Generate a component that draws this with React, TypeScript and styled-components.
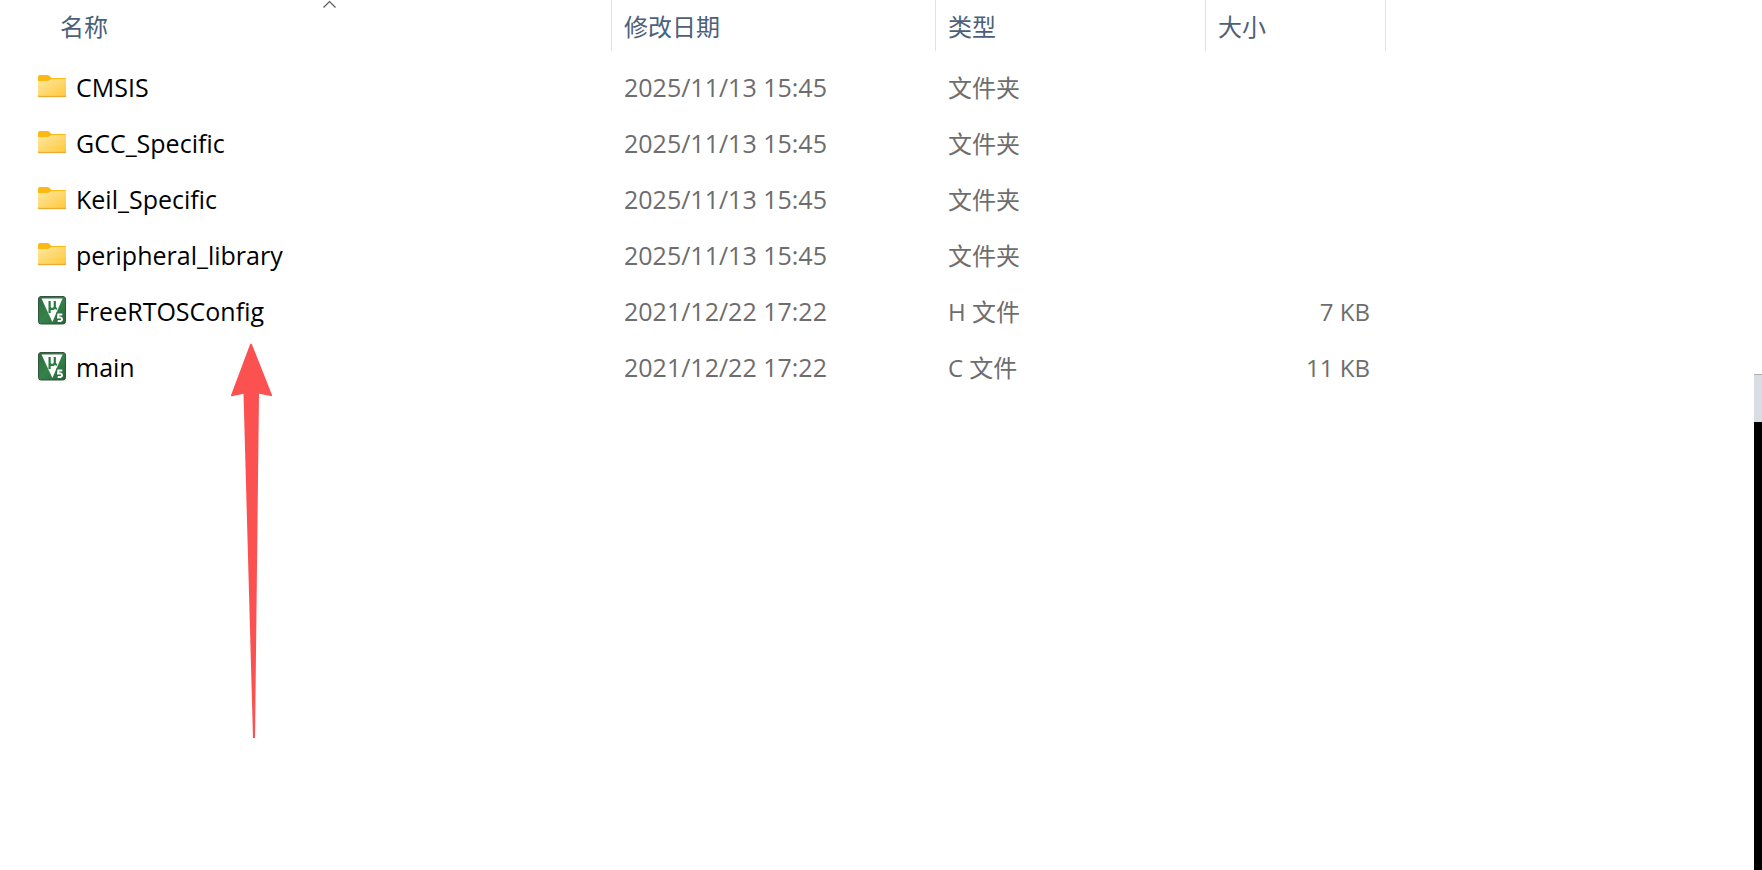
import React from "react";
import styled, { createGlobalStyle } from "styled-components";

const GlobalStyle = createGlobalStyle`
  *, *::before, *::after { box-sizing: border-box; }
  body {
    margin: 0;
    background: #fff;
    font-family: "Open Sans", "Noto Sans CJK SC", sans-serif;
    font-size: 24px;
    line-height: 32px;
  }
`;

const Window = styled.div`
  display: flex;
  min-height: 100vh;
`;

const ListPane = styled.main`
  position: relative;
  flex: 1;
  min-width: 0;
`;

const BackdropEdge = styled.div`
  display: flex;
  flex-direction: column;
  flex: none;
  width: 8px;
  padding-top: 374px;
`;

const BackdropBar = styled.div`
  height: 48px;
  border-top: 1px solid #aaadb2;
  background: #d9dee4;
`;

const BackdropBody = styled.div`
  flex: 1;
  background: #000;
`;

const FileTable = styled.table`
  width: 1386px;
  table-layout: fixed;
  border-collapse: separate;
  border-spacing: 0;
`;

const Column = styled.col<{ $width: number }>`
  width: ${(p) => p.$width}px;
`;

const HeaderCell = styled.th<{ $indent?: boolean }>`
  height: 51px;
  padding: 0 0 0 ${(p) => (p.$indent ? 48 : 0)}px;
  border-right: 1px solid #e2e2e2;
  font-weight: 400;
`;

const SortButton = styled.button`
  position: relative;
  display: block;
  width: 100%;
  height: 51px;
  padding: 2px 12px 0;
  border: 0;
  background: none;
  color: #4c607a;
  font: inherit;
  text-align: left;
`;

const SortMark = styled.svg`
  position: absolute;
  top: 0;
  left: 0;
  right: 0;
  margin: 0 auto;
`;

const Rows = styled.tbody`
  &::before {
    content: "";
    display: block;
    height: 9px;
  }
`;

const Cell = styled.td<{ $align?: "right" }>`
  height: 56px;
  padding: 0 ${(p) => (p.$align ? 16 : 12)}px 0 12px;
  color: #6d6d6d;
  text-align: ${(p) => p.$align ?? "left"};
  white-space: nowrap;
`;

const DateCell = styled(Cell)`
  padding-bottom: 2px;
  font-size: 25px;
`;

const NameCell = styled(DateCell)`
  padding-left: 37px;
  color: #000;
`;

const FileName = styled.div`
  display: flex;
  align-items: center;
  gap: 9px;
`;

const FileIcon = styled.svg`
  flex: none;
  width: 30px;
  height: 30px;
`;

const Pointer = styled.svg`
  position: absolute;
  top: 342px;
  left: 230px;
`;

const FolderIcon = () => (
  <FileIcon viewBox="0 -1 30 30" aria-hidden="true">
    <defs>
      <linearGradient id="folder-front" x1="0" y1="0" x2="1" y2="1">
        <stop offset="0" stopColor="#ffe8a2" />
        <stop offset="1" stopColor="#fec737" />
      </linearGradient>
    </defs>
    <path d="M1 4q0-2 2-2h7.500q1 0 1.800.8L14.500 5H28q1 0 1 1v4H1z" fill="#fdb813" />
    <path d="M1 8h9.500q1 0 1.800-.7L14.500 6H28q1 0 1 1v16q0 1-1 1H2q-1 0-1-1z" fill="url(#folder-front)" />
    <path d="M1 22.500q0 .7 1 .7h26q1 0 1-.7v.5q0 1-1 1H2q-1 0-1-1z" fill="#e9a52a" stroke="#e9a52a" strokeWidth=".3" />
  </FileIcon>
);

const KeilIcon = () => (
  <FileIcon viewBox="0 1 30 30" aria-hidden="true">
    <defs>
      <linearGradient id="keil-tile" x1="0" y1="0" x2="1" y2="1">
        <stop offset="0" stopColor="#2c6e3e" />
        <stop offset=".5" stopColor="#35824a" />
        <stop offset="1" stopColor="#286339" />
      </linearGradient>
    </defs>
    <rect x="1.500" y="1.500" width="27" height="27.500" rx="2.500" fill="url(#keil-tile)" stroke="#34533d" />
    <path d="M4.500 3.500h21L15.400 27z" fill="#fff" />
    <path d="M12.600 6v12M12.600 6v5.500q0 2.500 2.400 2.500t2.800-2.500V6M17.800 11q0 3 2.200 2.500" fill="none" stroke="#287a40" strokeWidth="2.200" />
    <path d="M25.300 19.400h-4l-.2 3.200q3.900-.7 3.900 1.700 0 2.400-4.300 1.600" fill="none" stroke="#2b7040" strokeWidth="4" />
    <path d="M25.300 19.400h-4l-.2 3.200q3.900-.7 3.900 1.700 0 2.400-4.300 1.600" fill="none" stroke="#fff" strokeWidth="2" />
  </FileIcon>
);

type Entry = {
  name: string;
  date: string;
  type: string;
  size?: string;
};

const entries: Entry[] = [
  { name: "CMSIS", date: "2025/11/13 15:45", type: "文件夹" },
  { name: "GCC_Specific", date: "2025/11/13 15:45", type: "文件夹" },
  { name: "Keil_Specific", date: "2025/11/13 15:45", type: "文件夹" },
  { name: "peripheral_library", date: "2025/11/13 15:45", type: "文件夹" },
  { name: "FreeRTOSConfig", date: "2021/12/22 17:22", type: "H 文件", size: "7 KB" },
  { name: "main", date: "2021/12/22 17:22", type: "C 文件", size: "11 KB" },
];

export default function App() {
  return (
    <Window lang="zh-CN">
      <GlobalStyle />
      <ListPane>
        <FileTable>
          <colgroup>
            <Column $width={612} />
            <Column $width={324} />
            <Column $width={270} />
            <Column $width={180} />
          </colgroup>
          <thead>
            <tr>
              <HeaderCell $indent scope="col" aria-sort="ascending">
                <SortButton type="button">
                  名称
                  <SortMark width="15" height="9" viewBox="0 0 15 9" aria-hidden="true">
                    <path d="M1.500 7.500l6-6 6 6" fill="none" stroke="#5a5a5a" strokeWidth="1.200" />
                  </SortMark>
                </SortButton>
              </HeaderCell>
              {["修改日期", "类型", "大小"].map((label) => (
                <HeaderCell key={label} scope="col">
                  <SortButton type="button">{label}</SortButton>
                </HeaderCell>
              ))}
            </tr>
          </thead>
          <Rows>
            {entries.map((entry) => (
              <tr key={entry.name}>
                <NameCell>
                  <FileName>
                    {entry.size ? <KeilIcon /> : <FolderIcon />}
                    {entry.name}
                  </FileName>
                </NameCell>
                <DateCell>{entry.date}</DateCell>
                <Cell>{entry.type}</Cell>
                <Cell $align="right">{entry.size}</Cell>
              </tr>
            ))}
          </Rows>
        </FileTable>
        <Pointer width="43" height="398" viewBox="0 0 43 398" aria-hidden="true">
          <path
            d="M20 2.500q1-2 2 0L42 53q.3 1.200-1 1l-12-2.200L25 396h-2L13.500 51.800 2 54.200q-1.300.2-1-1z"
            fill="#fb5151"
          />
        </Pointer>
      </ListPane>
      <BackdropEdge aria-hidden="true">
        <BackdropBar />
        <BackdropBody />
      </BackdropEdge>
    </Window>
  );
}
